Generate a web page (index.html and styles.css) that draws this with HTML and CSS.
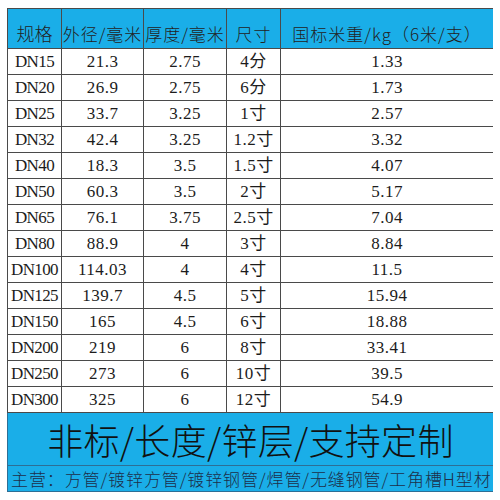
FILE: index.html
```html
<!DOCTYPE html>
<html lang="zh-CN">
<head>
    <meta charset="UTF-8">
    <title>镀锌钢管规格表</title>
    <link rel="stylesheet" href="styles.css">
</head>
<body>
    <table class="spec-table">
        <colgroup>
            <col class="col-size">
            <col class="col-od">
            <col class="col-wall">
            <col class="col-inch">
            <col class="col-weight">
        </colgroup>
        <thead>
            <tr class="head-row">
                <th>规格</th>
                <th>外径/毫米</th>
                <th>厚度/毫米</th>
                <th>尺寸</th>
                <th>国标米重/kg（6米/支）</th>
            </tr>
        </thead>
        <tbody>
            <tr><td>DN15</td><td>21.3</td><td>2.75</td><td>4分</td><td>1.33</td></tr>
            <tr><td>DN20</td><td>26.9</td><td>2.75</td><td>6分</td><td>1.73</td></tr>
            <tr><td>DN25</td><td>33.7</td><td>3.25</td><td>1寸</td><td>2.57</td></tr>
            <tr><td>DN32</td><td>42.4</td><td>3.25</td><td>1.2寸</td><td>3.32</td></tr>
            <tr><td>DN40</td><td>18.3</td><td>3.5</td><td>1.5寸</td><td>4.07</td></tr>
            <tr><td>DN50</td><td>60.3</td><td>3.5</td><td>2寸</td><td>5.17</td></tr>
            <tr><td>DN65</td><td>76.1</td><td>3.75</td><td>2.5寸</td><td>7.04</td></tr>
            <tr><td>DN80</td><td>88.9</td><td>4</td><td>3寸</td><td>8.84</td></tr>
            <tr><td>DN100</td><td>114.03</td><td>4</td><td>4寸</td><td>11.5</td></tr>
            <tr><td>DN125</td><td>139.7</td><td>4.5</td><td>5寸</td><td>15.94</td></tr>
            <tr><td>DN150</td><td>165</td><td>4.5</td><td>6寸</td><td>18.88</td></tr>
            <tr><td>DN200</td><td>219</td><td>6</td><td>8寸</td><td>33.41</td></tr>
            <tr><td>DN250</td><td>273</td><td>6</td><td>10寸</td><td>39.5</td></tr>
            <tr><td>DN300</td><td>325</td><td>6</td><td>12寸</td><td>54.9</td></tr>
        </tbody>
        <tfoot>
            <tr class="banner-row">
                <td colspan="5">非标/长度/锌层/支持定制</td>
            </tr>
            <tr class="business-row">
                <td colspan="5">主营：方管/镀锌方管/镀锌钢管/焊管/无缝钢管/工角槽H型材</td>
            </tr>
        </tfoot>
    </table>
</body>
</html>
```

FILE: styles.css
```css
:root {
    --blue: #1aaee8;
    --line: #4a4a4a;
    --line-blue: #2d6f95;
    --text: #1c1c1c;
}

body {
    margin: 8px 7px;
    background: #ffffff;
    color: var(--text);
    font-family: "Liberation Serif", "Noto Sans CJK SC", serif;
}

.spec-table {
    border-collapse: collapse;
    table-layout: fixed;
    width: 486px;
}

.col-size { width: 54px; }
.col-od { width: 82px; }
.col-wall { width: 83px; }
.col-inch { width: 54px; }
.col-weight { width: 213px; }

.spec-table th,
.spec-table td {
    border: 1px solid var(--line);
    padding: 0;
    text-align: center;
    white-space: nowrap;
    overflow: hidden;
}

.head-row th {
    height: 37px;
    background: var(--blue);
    font-family: "Noto Sans CJK SC", sans-serif;
    font-weight: 300;
    font-size: 17px;
    letter-spacing: 1px;
    vertical-align: bottom;
    padding-bottom: 2px;
    color: #222;
}

.head-row th:first-child {
    font-size: 18px;
    letter-spacing: 0;
}

tbody td {
    height: 25px;
    font-size: 17px;
    line-height: 25px;
    letter-spacing: 0.5px;
}

tbody td:first-child {
    letter-spacing: -0.6px;
}

.banner-row td {
    height: 51px;
    background: var(--blue);
    border-color: var(--line-blue);
    font-family: "Noto Sans CJK SC", sans-serif;
    font-weight: 300;
    font-size: 36px;
    letter-spacing: 0.3px;
    color: #111;
}

.business-row td {
    height: 25px;
    background: var(--blue);
    border-color: var(--line-blue);
    text-align: left;
    padding-left: 3px;
    font-family: "Noto Sans CJK SC", sans-serif;
    font-weight: 300;
    font-size: 17px;
    letter-spacing: 0.9px;
    color: #1d2f4a;
}
```
